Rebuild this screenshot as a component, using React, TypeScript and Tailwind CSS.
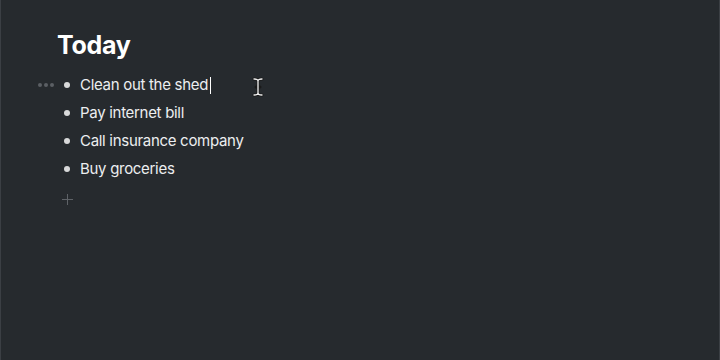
import React from "react";

const items = ["Clean out the shed", "Pay internet bill", "Call insurance company", "Buy groceries"];

export default function App() {
  return (
    <div className="w-[720px] h-[360px] bg-[#262a2e] border-x border-[#3b3f44] overflow-hidden relative" style={{ fontFamily: "Inter, 'Noto Sans', sans-serif" }}>
      <div className="pl-[56px] pt-[29px]">
        <h1 className="text-[25px] leading-[32px] font-bold text-white tracking-[-0.3px]">Today</h1>
        <div className="mt-[10px] flex flex-col">
          {items.map((t, i) => (
            <div key={t} className="relative h-[28px] flex items-center">
              {i === 0 && (
                <div className="absolute left-[-19px] top-[12px] flex gap-[2px]">
                  <span className="w-[4px] h-[4px] rounded-full bg-[#5b5f64]" />
                  <span className="w-[4px] h-[4px] rounded-full bg-[#5b5f64]" />
                  <span className="w-[4px] h-[4px] rounded-full bg-[#5b5f64]" />
                </div>
              )}
              <span className="ml-[7px] w-[6px] h-[6px] rounded-full bg-[#d8d9da]" />
              <span className="ml-[10px] text-[15px] text-[#eceef0] leading-[28px] tracking-[-0.3px]">{t}</span>
              {i === 0 && <span className="ml-[2px] w-[1px] h-[17px] bg-white" />}
            </div>
          ))}
        </div>
        <div className="ml-[5px] mt-[10px] h-[14px] w-[12px] relative">
          <span className="absolute left-[5px] top-[1px] w-[1px] h-[11px] bg-[#5e6267]" />
          <span className="absolute left-0 top-[6px] w-[11px] h-[1px] bg-[#5e6267]" />
        </div>
      </div>
      <svg className="absolute left-[251px] top-[77px]" width="12" height="20" viewBox="0 0 12 20">
        <path d="M2 2 Q6 2 6 4 Q6 2 10 2 M6 4 V16 M2 18 Q6 18 6 16 Q6 18 10 18 M4 10 H8" stroke="#1a1a1a" strokeWidth="3" fill="none" strokeLinecap="round" />
        <path d="M2 2 Q6 2 6 4 Q6 2 10 2 M6 4 V16 M2 18 Q6 18 6 16 Q6 18 10 18" stroke="#f2f2f2" strokeWidth="1.3" fill="none" strokeLinecap="round" />
      </svg>
    </div>
  );
}
